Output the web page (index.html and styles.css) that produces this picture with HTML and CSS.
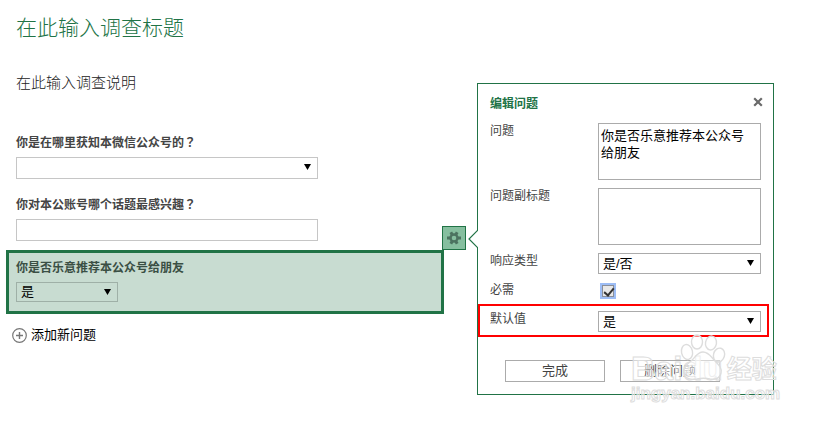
FILE: index.html
```html
<!DOCTYPE html>
<html lang="zh-CN">
<head>
    <meta charset="UTF-8">
    <meta name="viewport" content="width=device-width, initial-scale=1.0">
    <title>编辑问题</title>
    <link rel="stylesheet" href="styles.css">
</head>
<body>
    <div class="page">
        <main class="survey">
            <h1>在此输入调查标题</h1>
            <p class="description">在此输入调查说明</p>

            <div class="question">
                <label for="q1">你是在哪里获知本微信公众号的<span lang="zh-TW">？</span></label>
                <span class="select-box">
                    <select id="q1"><option></option></select>
                </span>
            </div>

            <div class="question">
                <label for="q2">你对本公账号哪个话题最感兴趣<span lang="zh-TW">？</span></label>
                <input id="q2" type="text">
            </div>

            <div class="question active">
                <label for="q3">你是否乐意推荐本公众号给朋友</label>
                <span class="select-box">
                    <select id="q3"><option>是</option><option>否</option></select>
                </span>
                <button type="button" class="gear" aria-label="编辑问题">
                    <svg width="14" height="14" viewBox="0 0 14 14">
                        <g stroke="#4c7360" stroke-width="3">
                            <path d="M0 7H14M3.8 1.2L10.2 12.8M10.2 1.2L3.8 12.8"/>
                        </g>
                        <circle cx="7" cy="7" r="3.5" fill="#86bf9f" stroke="#4c7360" stroke-width="2.4"/>
                    </svg>
                </button>
            </div>

            <button type="button" class="add">
                <svg width="15" height="15" viewBox="0 0 15 15" fill="none" stroke="#777">
                    <circle cx="7.5" cy="7.5" r="6.8" stroke-width="1.2"/>
                    <path d="M4 7.5H11M7.5 4V11" stroke-width="1.4"/>
                </svg>
                添加新问题
            </button>
        </main>

        <form class="panel">
            <svg class="pointer" width="10" height="18" viewBox="0 0 10 18">
                <path d="M10 0L1 9L10 18" fill="#fff" stroke="#217346" stroke-width="1.2"/>
            </svg>
            <header class="panel-header">
                <h2>编辑问题</h2>
                <button type="button" class="close" aria-label="关闭">
                    <svg width="10" height="10" viewBox="0 0 10 10">
                        <path d="M1.2 1.2L8.8 8.8M8.8 1.2L1.2 8.8" stroke="#6a6a6a" stroke-width="2.2"/>
                    </svg>
                </button>
            </header>
            <div class="row">
                <label for="title">问题</label>
                <textarea id="title">你是否乐意推荐本公众号给朋友</textarea>
            </div>
            <div class="row">
                <label for="subtitle">问题副标题</label>
                <textarea id="subtitle"></textarea>
            </div>
            <div class="row type">
                <label for="type">响应类型</label>
                <span class="select-box">
                    <select id="type"><option>是/否</option></select>
                </span>
            </div>
            <div class="row required">
                <label for="required">必需</label>
                <input id="required" type="checkbox" checked>
            </div>
            <div class="row highlight">
                <label for="default">默认值</label>
                <span class="select-box">
                    <select id="default"><option>是</option><option>否</option></select>
                </span>
            </div>
            <div class="actions">
                <button type="button">完成</button>
                <button type="button">删除问题</button>
            </div>

            <div class="watermark">
                <svg class="paw" width="48" height="48" viewBox="0 0 48 48">
                    <g fill="#fff" fill-opacity="0.5" stroke="#ddd" stroke-width="1.4">
                        <ellipse cx="8" cy="18" rx="5.5" ry="7.5" transform="rotate(-12 8 18)"/>
                        <ellipse cx="18" cy="8" rx="5.5" ry="7"/>
                        <ellipse cx="32" cy="9" rx="5.5" ry="7" transform="rotate(10 32 9)"/>
                        <ellipse cx="40" cy="21" rx="5.5" ry="7" transform="rotate(16 40 21)"/>
                        <path d="M24 18C18 18 16 24 12 27C7 31 4 34 5 39C6 45 12 46 18 45C22 44 27 44 31 45C37 46 41 44 42 39C43 34 40 31 36 27C32 23 30 18 24 18Z"/>
                    </g>
                </svg>
                <div class="brand"><span class="latin">Baidu</span><span>经验</span></div>
                <div class="site">jingyan.baidu.com</div>
            </div>
        </form>
    </div>
</body>
</html>
```

FILE: styles.css
```css
* {
    box-sizing: border-box;
}

body {
    margin: 0;
    background: #fff;
    color: #444;
    font-family: "Liberation Sans", "Noto Sans CJK SC", sans-serif;
    font-size: 12px;
    line-height: 16px;
}

h1, h2, p {
    margin: 0;
}

button, input, select, textarea {
    margin: 0;
    font: inherit;
    color: #000;
}

svg {
    display: block;
}

.page {
    display: grid;
    grid-template-columns: minmax(0, 438px) 297px;
    column-gap: 33px;
    align-items: start;
    padding: 12px 6px;
}

.survey h1 {
    padding: 0 10px;
    font-size: 21px;
    font-weight: 300;
    line-height: 32px;
    color: #217346;
}

.description {
    margin: 28px 0 41px;
    padding: 0 10px;
    font-size: 15px;
    font-weight: 300;
    line-height: 22px;
    color: #222;
}

/* questions */
.question {
    position: relative;
    display: flex;
    flex-direction: column;
    align-items: flex-start;
    gap: 6px;
    padding: 0 10px;
    margin-bottom: 18px;
}

.question label {
    height: 16px;
    font-weight: bold;
}

.question input,
.question .select-box {
    width: 302px;
    max-width: 100%;
    height: 22px;
}

.question input,
.question select {
    border: 1px solid #c6c6c6;
    background: #fff;
}

.question.active {
    margin: -9px 0 12px;
    padding: 7px 7px 9px;
    border: 3px solid #217346;
    background: #c8dcd1;
}

.question.active label {
    color: #3a4f44;
}

.question.active .select-box {
    width: 102px;
    height: 20px;
}

.question.active select {
    border-color: #9fb0a7;
    background: transparent;
}

.select-box {
    position: relative;
    display: block;
}

.select-box select {
    display: block;
    width: 100%;
    height: 100%;
    padding: 0 20px 0 4px;
    border-radius: 0;
    appearance: none;
    font-size: 13px;
}

.select-box::after {
    content: "";
    position: absolute;
    top: 7px;
    right: 7px;
    width: 7px;
    height: 6px;
    background: #000;
    clip-path: polygon(0 0, 100% 0, 50% 100%);
    pointer-events: none;
}

.gear {
    position: absolute;
    top: -27px;
    right: -25px;
    display: grid;
    place-items: center;
    width: 24px;
    height: 24px;
    padding: 0;
    border: 1px solid #217346;
    background: #86bf9f;
}

.add {
    display: flex;
    align-items: center;
    gap: 4px;
    padding: 0 6px;
    border: 0;
    background: none;
    font-size: 13px;
    line-height: 18px;
}

/* edit panel */
.panel {
    position: relative;
    margin-top: 71px;
    padding-bottom: 12px;
    border: 1px solid #217346;
    background: #fff;
}

.pointer {
    position: absolute;
    top: 146px;
    left: -10px;
}

.panel-header {
    display: flex;
    justify-content: space-between;
    padding: 12px 10px 11px 12px;
}

.panel-header h2 {
    font-size: 12px;
    color: #217346;
}

.close {
    height: 12px;
    padding: 0;
    border: 0;
    background: none;
}

.row {
    display: grid;
    grid-template-columns: 108px minmax(0, 1fr);
    align-items: start;
    margin-bottom: 8px;
    padding: 0 12px;
}

.row textarea {
    display: block;
    width: 100%;
    height: 57px;
    padding: 3px 10px 3px 2px;
    border: 1px solid #ababab;
    resize: none;
    font-size: 13px;
    line-height: 17px;
}

.row .select-box {
    height: 21px;
}

.row select {
    border: 1px solid #ababab;
    background: #fff;
}

.row.type {
    margin-bottom: 0;
}

.row.required {
    margin: 0;
    padding: 8px 12px 6px;
}

.required input {
    position: relative;
    display: block;
    appearance: none;
    width: 12px;
    height: 12px;
    margin: 3px 4px 0;
    border: 1px solid #8a8f99;
    background: #e8e8e8;
    box-shadow: 0 0 0 2px #9dbdf5;
}

.required input:checked::after {
    content: "";
    position: absolute;
    top: 0;
    left: 3px;
    width: 4px;
    height: 8px;
    border: solid #333;
    border-width: 0 2px 2px 0;
    transform: rotate(40deg);
}

.row.highlight {
    margin: 0 4px 0 0;
    padding: 5px 6px 3px 10px;
    border: 2px solid #f00;
}

.actions {
    display: flex;
    gap: 15px;
    margin-top: 23px;
    padding-left: 27px;
}

.actions button {
    width: 100px;
    height: 22px;
    padding: 0;
    border: 1px solid #ababab;
    background: #fff;
    color: #444;
    font-size: 13px;
}

/* watermark */
.watermark {
    position: absolute;
    right: -6px;
    bottom: -10px;
    width: 148px;
    color: rgba(255, 255, 255, 0.5);
    -webkit-text-stroke: 1px #ddd;
    font-weight: bold;
    pointer-events: none;
}

.paw {
    position: absolute;
    top: -20px;
    left: 48px;
}

.brand {
    display: flex;
    align-items: center;
    gap: 4px;
    font-size: 25px;
    line-height: 30px;
}

.brand .latin {
    font-size: 33px;
}

.site {
    font-size: 17px;
    line-height: 20px;
}
```
